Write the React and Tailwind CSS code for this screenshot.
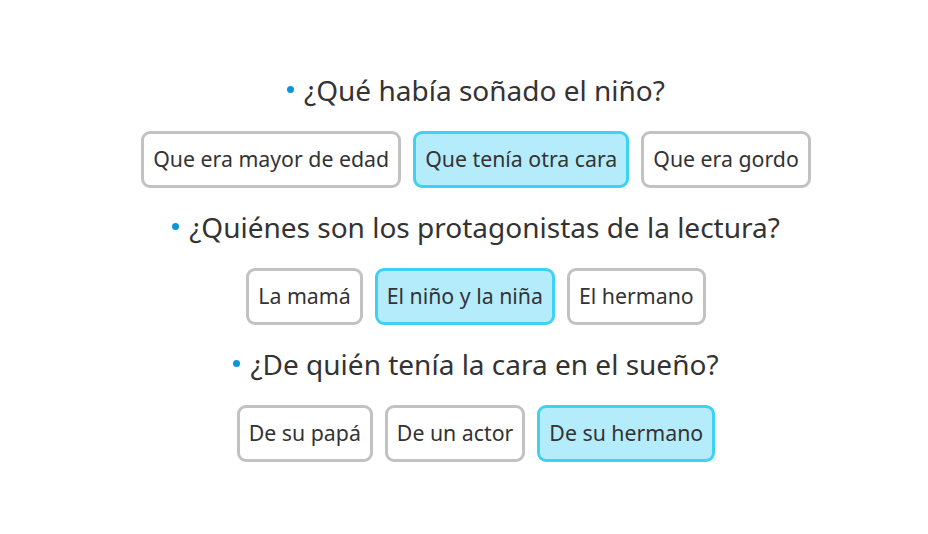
import React from "react";

const data = [
  { q: "¿Qué había soñado el niño?", opts: ["Que era mayor de edad", "Que tenía otra cara", "Que era gordo"], sel: 1 },
  { q: "¿Quiénes son los protagonistas de la lectura?", opts: ["La mamá", "El niño y la niña", "El hermano"], sel: 1 },
  { q: "¿De quién tenía la cara en el sueño?", opts: ["De su papá", "De un actor", "De su hermano"], sel: 2 },
];

export default function App() {
  return (
    <div className="min-h-screen w-full bg-white flex flex-col items-center justify-center gap-[22px] pl-[24px] text-[#333333]" style={{ fontFamily: '"Noto Sans", sans-serif' }}>
      {data.map((item, i) => (
        <div key={i} className="flex flex-col items-center">
          <div className="flex items-center text-[28px] leading-[34px] mb-[24px]">
            <span className="w-[7px] h-[7px] rounded-full bg-[#0b96d8] mr-[10px]"></span>
            <span>{item.q}</span>
          </div>
          <div className="flex gap-[12px]">
            {item.opts.map((o, j) => (
              <div
                key={j}
                className={
                  "h-[57px] px-[9px] flex items-center rounded-[9px] border-[3px] text-[21.3px] " +
                  (j === item.sel ? "bg-[#b5ecfc] border-[#3dd2f4]" : "bg-white border-[#c2c2c2]")
                }
              >
                {o}
              </div>
            ))}
          </div>
        </div>
      ))}
    </div>
  );
}
